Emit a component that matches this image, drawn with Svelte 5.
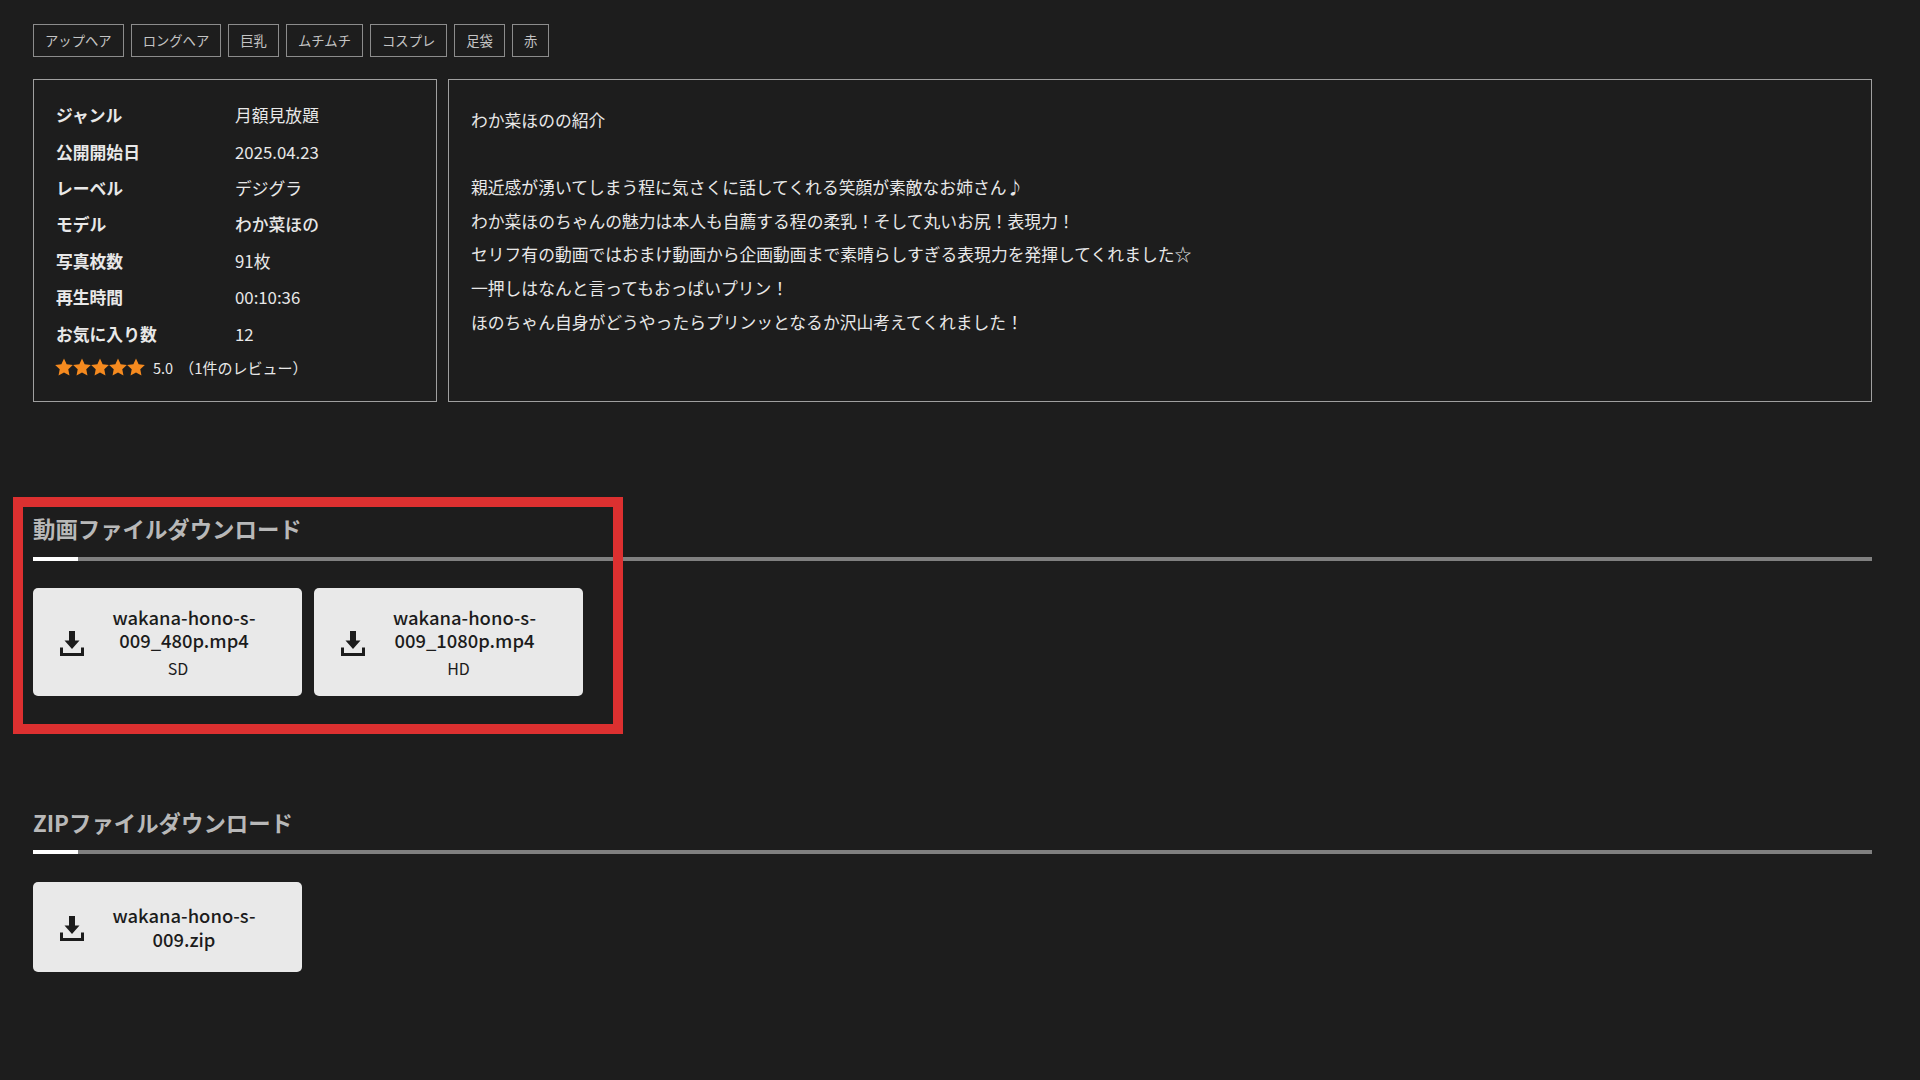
<script>
    const tags = ['アップヘア', 'ロングヘア', '巨乳', 'ムチムチ', 'コスプレ', '足袋', '赤'];

    const info = [
        ['ジャンル', '月額見放題', false],
        ['公開開始日', '2025.04.23', false],
        ['レーベル', 'デジグラ', false],
        ['モデル', 'わか菜ほの', true],
        ['写真枚数', '91枚', false],
        ['再生時間', '00:10:36', false],
        ['お気に入り数', '12', false]
    ];

    const intro = [
        'わか菜ほのの紹介',
        '',
        '親近感が湧いてしまう程に気さくに話してくれる笑顔が素敵なお姉さん♪',
        'わか菜ほのちゃんの魅力は本人も自薦する程の柔乳！そして丸いお尻！表現力！',
        'セリフ有の動画ではおまけ動画から企画動画まで素晴らしすぎる表現力を発揮してくれました☆',
        '一押しはなんと言ってもおっぱいプリン！',
        'ほのちゃん自身がどうやったらプリンッとなるか沢山考えてくれました！'
    ];

    const videos = [
        { name: 'wakana-hono-s-009_480p.mp4', quality: 'SD' },
        { name: 'wakana-hono-s-009_1080p.mp4', quality: 'HD' }
    ];
</script>

{#snippet fileButton(name, quality)}
    <button class="file" class:short={!quality}>
        <svg class="dl" viewBox="0 0 24 25" width="24" height="25">
            <path d="M9 0h6v9.5h4.500L12 18 4.500 9.500H9z" />
            <path d="M0 16.500h3V22h18v-5.500h3V25H0z" />
        </svg>
        <span class="file-text">
            <span class="file-name">{name}</span>
            {#if quality}<span class="file-quality">{quality}</span>{/if}
        </span>
    </button>
{/snippet}

<div class="page">
    <ul class="tags">
        {#each tags as tag}
            <li>{tag}</li>
        {/each}
    </ul>

    <div class="details">
        <div class="info">
            {#each info as [label, value, strong]}
                <div class="row">
                    <span class="label">{label}</span>
                    <span class="value" class:strong>{value}</span>
                </div>
            {/each}
            <div class="rating">
                <span class="stars">
                    {#each Array(5) as _}
                        <svg viewBox="0 0 24 24" width="18" height="18">
                            <path d="M12 .8l3.500 7.600 8.300 1-6.100 5.700 1.600 8.200L12 19.200l-7.300 4.100 1.600-8.200L.2 9.400l8.300-1z" />
                        </svg>
                    {/each}
                </span>
                <span class="score">5.0</span>
                <span class="reviews">（1件のレビュー）</span>
            </div>
        </div>
        <div class="intro">
            {#each intro as line}
                <p>{line}</p>
            {/each}
        </div>
    </div>

    <section class="video">
        <h2>動画ファイルダウンロード</h2>
        <div class="files">
            {#each videos as v}
                {@render fileButton(v.name, v.quality)}
            {/each}
        </div>
        <div class="marker"></div>
    </section>

    <section class="zip">
        <h2>ZIPファイルダウンロード</h2>
        <div class="files">
            {@render fileButton('wakana-hono-s-009.zip')}
        </div>
    </section>
</div>

<style>
:global(body) {
    background: #1d1d1d;
}
.page {
    box-sizing: border-box;
    width: 1920px;
    height: 1080px;
    padding: 24px 48px 0 33px;
    overflow: hidden;
    color: #e8e8e8;
    font-family: "Noto Sans CJK JP", "Noto Sans", sans-serif;
}
.tags {
    display: flex;
    gap: 7px;
    margin: 0;
    padding: 0;
    list-style: none;
}
.tags li {
    box-sizing: border-box;
    height: 33px;
    padding: 0 11px;
    border: 1px solid #8c8c8c;
    font-size: 13.33px;
    line-height: 31px;
    color: #c4c4c4;
}
.details {
    display: flex;
    gap: 11px;
    margin-top: 22px;
    height: 323px;
}
.info {
    box-sizing: border-box;
    width: 404px;
    padding: 17px 21px 0;
    border: 1px solid #a0a0a0;
}
.row {
    display: flex;
    height: 36.4px;
    align-items: center;
    font-size: 16.8px;
}
.label {
    width: 180px;
    padding-left: 1px;
    box-sizing: border-box;
    font-weight: 700;
}
.value.strong {
    font-weight: 500;
}
.rating {
    display: flex;
    align-items: center;
    height: 31px;
    font-size: 14.5px;
}
.stars {
    display: flex;
    fill: #f58a1f;
}
.stars svg {
    display: block;
}
.score {
    margin-left: 8px;
}
.reviews {
    margin-left: 6px;
    font-size: 15px;
}
.intro {
    box-sizing: border-box;
    flex: 1;
    padding: 24px 22px 0;
    border: 1px solid #a0a0a0;
    font-size: 16.8px;
    line-height: 33.6px;
}
.intro p {
    margin: 0;
    min-height: 33.6px;
}
section {
    position: relative;
}
section h2 {
    position: relative;
    margin: 0;
    padding-bottom: 11px;
    border-bottom: 4px solid #808080;
    font-size: 22.4px;
    line-height: 36px;
    font-weight: 700;
    color: #b8b8b8;
}
section h2::after {
    content: "";
    position: absolute;
    left: 0;
    bottom: -4px;
    width: 45px;
    height: 4px;
    background: #fff;
}
.video {
    margin-top: 108px;
}
.zip {
    margin-top: 108px;
}
.zip h2 {
    padding-bottom: 10px;
}
.zip .files {
    margin-top: 28px;
}
.files {
    display: flex;
    gap: 11.5px;
    margin-top: 27px;
}
.file {
    display: flex;
    align-items: center;
    box-sizing: border-box;
    width: 269px;
    height: 108px;
    padding: 0 24px 0 27px;
    border: 0;
    border-radius: 5px;
    background: #e9e9e9;
    color: #1c1c1c;
    font-family: inherit;
    text-align: center;
}
.file.short {
    height: 90px;
}
.dl {
    flex: none;
    margin-top: 3px;
    fill: #1c1c1c;
}
.file-text {
    flex: 1;
    min-width: 0;
    margin-left: 6px;
    padding-top: 1px;
    display: flex;
    flex-direction: column;
    align-items: center;
}
.file-name {
    width: 160px;
    font-size: 18.4px;
    line-height: 23.4px;
    font-weight: 500;
    overflow-wrap: anywhere;
}
.file-quality {
    margin-top: 5px;
    margin-right: 12px;
    font-size: 16px;
    line-height: 22px;
}
.marker {
    position: absolute;
    left: -20px;
    top: -13px;
    box-sizing: border-box;
    width: 610px;
    height: 237px;
    border: 10px solid #dc3030;
    pointer-events: none;
}
</style>
